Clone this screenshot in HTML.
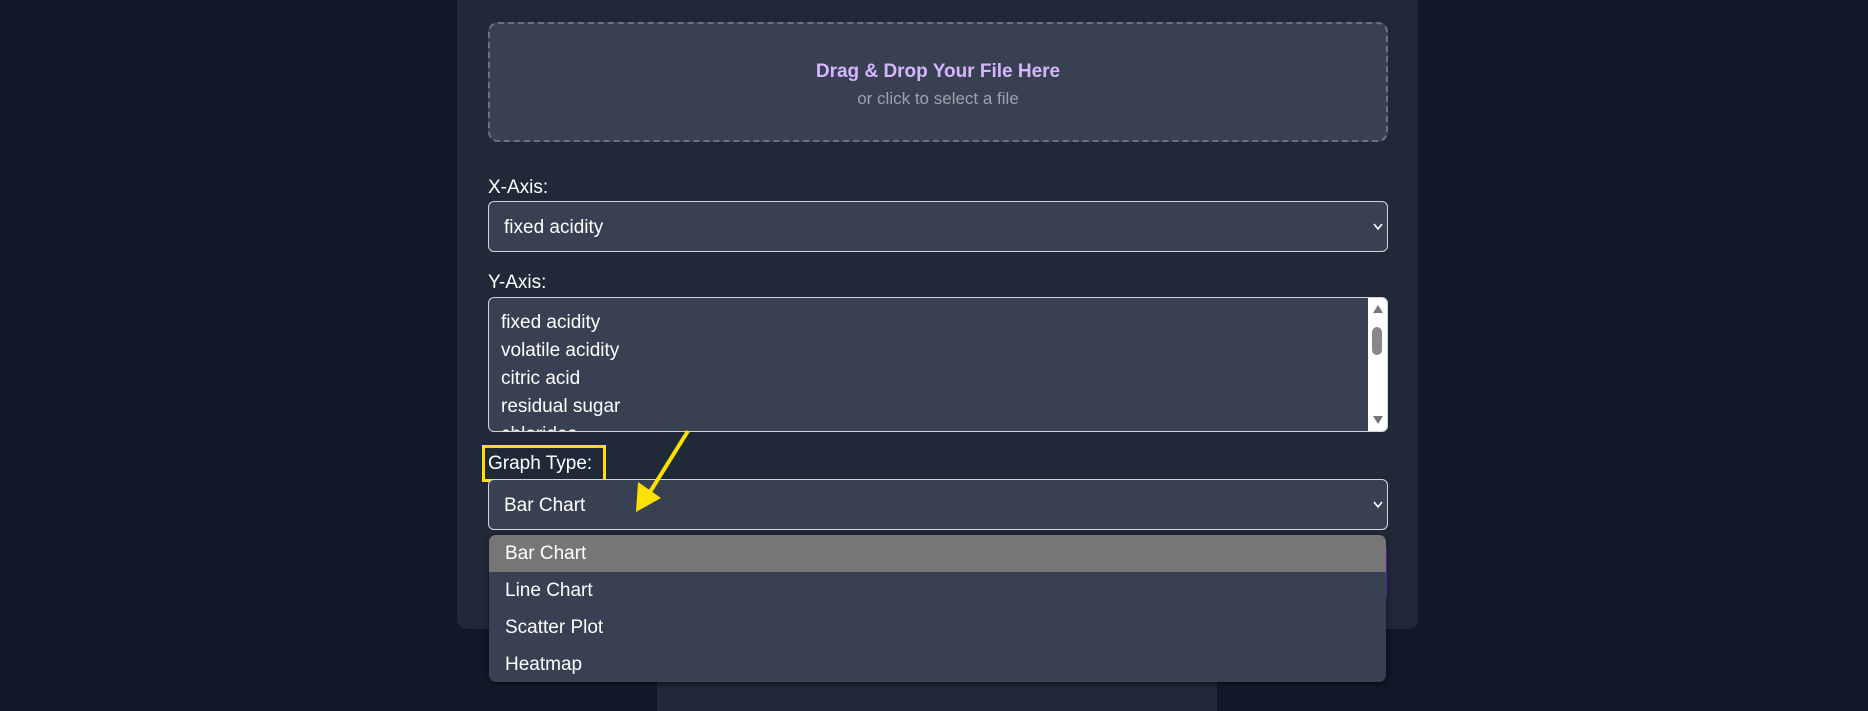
<!DOCTYPE html><html><head><style>
body{margin:0;width:1868px;height:711px;background:#111827;overflow:hidden;font-family:"Liberation Sans",sans-serif;position:relative;color:#fff}
.a{position:absolute}
.card{left:457px;top:-20px;width:961px;height:649px;background:#1f2937;border-radius:10px}
.drop{left:488px;top:22px;width:900px;height:120px;border:2px dashed #6b7280;border-radius:10px;background:#374151;text-align:center;box-sizing:border-box}
.lbl{font-size:19px;color:#fff}
.sel{left:488px;width:900px;background:#374151;border:1px solid #d1d5db;border-radius:6px;font-size:19px;box-sizing:border-box}
.opt{height:37px;line-height:37px;padding-left:16px;font-size:19px}
.chev{position:absolute;right:4px;top:0;width:10px}
</style></head><body>
<div class="a" style="left:657px;top:682px;width:560px;height:29px;background:#1f2937"></div>
<div class="a card"></div>
<div class="a drop"><div style="margin-top:37px;color:#d8b4fe;font-weight:bold;font-size:19px">Drag &amp; Drop Your File Here</div><div style="margin-top:6px;color:#9ca3af;font-size:17px">or click to select a file</div></div>
<div class="a lbl" style="left:488px;top:177px">X-Axis:</div>
<div class="a sel" style="top:201px;height:51px;line-height:51px;padding-left:15px">fixed acidity<svg class="chev" height="51" viewBox="0 0 10 51"><path d="M1 22l4 5 4-5" stroke="#fff" stroke-width="1.6" fill="none"/></svg></div>
<div class="a lbl" style="left:488px;top:272px">Y-Axis:</div>
<div class="a sel" style="top:297px;height:135px;padding:11px 0 0 12px;line-height:28px;overflow:hidden">fixed acidity<br>volatile acidity<br>citric acid<br>residual sugar<br>chlorides
<div style="position:absolute;right:0;top:0;width:19px;height:133px;background:#fff"><div style="position:absolute;left:5px;top:7px;border:5px solid transparent;border-bottom:8px solid #777;border-top:0"></div><div style="position:absolute;left:4px;top:29px;width:10px;height:28px;border-radius:5px;background:#888"></div><div style="position:absolute;left:5px;bottom:7px;border:5px solid transparent;border-top:8px solid #777;border-bottom:0"></div></div></div>
<div class="a" style="left:482px;top:445px;width:118px;height:31px;border:3px solid #ffe000"></div>
<div class="a lbl" style="left:488px;top:453px">Graph Type:</div>
<div class="a sel" style="top:479px;height:51px;line-height:51px;padding-left:15px">Bar Chart<svg class="chev" height="51" viewBox="0 0 10 51"><path d="M1 22l4 5 4-5" stroke="#fff" stroke-width="1.6" fill="none"/></svg></div>
<div class="a" style="left:1383px;top:548px;width:4px;height:50px;background:#7e22ce"></div>
<div class="a" style="left:489px;top:535px;width:897px;height:147px;background:#374151;border-radius:7px;overflow:hidden;box-shadow:0 2px 6px rgba(0,0,0,.5)">
<div class="opt" style="background:#767676">Bar Chart</div><div class="opt">Line Chart</div><div class="opt">Scatter Plot</div><div class="opt">Heatmap</div></div>
<svg class="a" style="left:0;top:0" width="1868" height="711"><line x1="688" y1="431" x2="650" y2="492" stroke="#ffe000" stroke-width="4"/><polygon points="636,512 638,482 661,498" fill="#ffe000"/></svg>
</body></html>
